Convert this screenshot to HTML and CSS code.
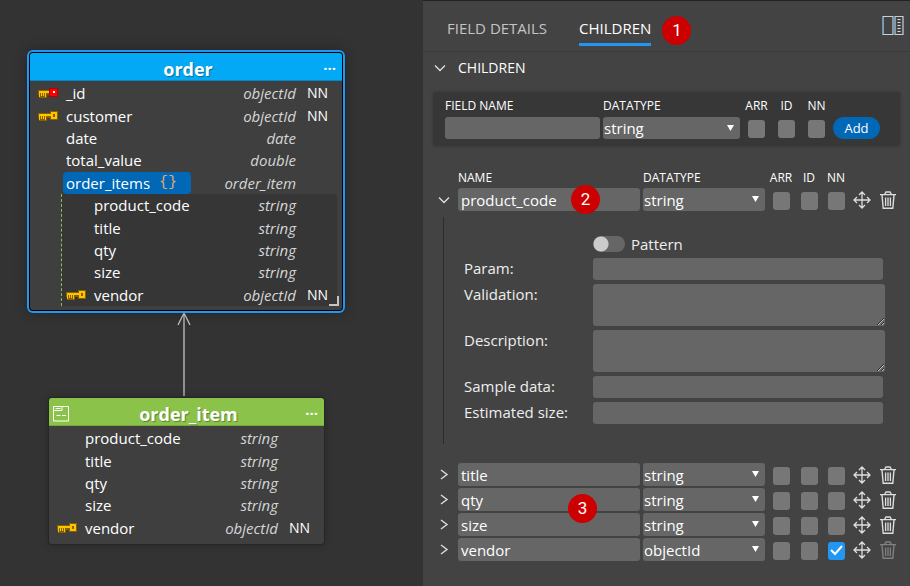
FILE: index.html
```html
<!DOCTYPE html>
<html lang="en">
<head>
    <meta charset="UTF-8">
    <meta name="viewport" content="width=device-width, initial-scale=1.0">
    <title>Data Model - order</title>
    <link rel="stylesheet" href="styles.css">
</head>
<body>
    <!-- Shared icons -->
    <svg class="sprite" aria-hidden="true">
        <symbol id="icon-key" viewBox="0 0 20 10">
            <path d="M0 2h12V0h8v9h-8V7H9v3H1V7H0z" fill="#8a6100"/>
            <path d="M1 3h12v2H8v4H7V5H6v3H5V5H4v3H3V5H2v4H1z" fill="#ffc400"/>
            <path d="M13 1h6v7h-6z" fill="#ffc400"/>
            <path d="M15 3h2v3h-2z" fill="#8a6100"/>
        </symbol>
        <symbol id="icon-key-red" viewBox="0 0 20 10">
            <path d="M0 2h12v5H9v3H1V7H0z" fill="#8a6100"/>
            <path d="M1 3h11v2H8v4H7V5H6v3H5V5H4v3H3V5H2v4H1z" fill="#ffc400"/>
            <path d="M11 0h9v9h-9z" fill="#b80000"/>
            <path d="M12 1h7v7h-7z" fill="#ff0000"/>
            <path d="M15 3h2v2h-2z" fill="#fff"/>
        </symbol>
        <symbol id="icon-move" viewBox="0 0 18 18">
            <path d="M9 1v16M1 9h16M6 4l3-3 3 3M6 14l3 3 3-3M4 6L1 9l3 3M14 6l3 3-3 3" fill="none" stroke="currentColor" stroke-width="1.3"/>
        </symbol>
        <symbol id="icon-trash" viewBox="0 0 18 18">
            <path d="M1 3.6h16M5.5 3.5L7 1h4l1.5 2.5M3 4l1.2 13.2h9.6L15 4" fill="none" stroke="currentColor" stroke-width="1.4"/>
            <path d="M6.6 6.500v8.500M9 6.500v8.500M11.400 6.500v8.500" stroke="currentColor" stroke-width="1.3"/>
        </symbol>
        <symbol id="icon-down" viewBox="0 0 12 12">
            <path d="M1 3.500l5 5 5-5" fill="none" stroke="currentColor" stroke-width="1.4"/>
        </symbol>
        <symbol id="icon-right" viewBox="0 0 12 12">
            <path d="M3 1l6 4.500-6 4.500" fill="none" stroke="currentColor" stroke-width="1.4"/>
        </symbol>
    </svg>

    <div class="app">
        <!-- Diagram -->
        <main class="canvas">
            <svg class="link" viewBox="0 0 16 86" aria-hidden="true">
                <path d="M8 1v83M2 13L8 1l6 12" fill="none" stroke="#c4c4c4" stroke-width="1.3"/>
            </svg>

            <section class="entity entity-order selected">
                <header class="entity-header">
                    <h2>order</h2>
                    <button class="more" aria-label="More">···</button>
                </header>
                <div class="fields">
                    <div class="field"><svg class="key"><use href="#icon-key-red"/></svg><span class="name">_id</span><span class="type">objectId</span><span class="nn">NN</span></div>
                    <div class="field"><svg class="key"><use href="#icon-key"/></svg><span class="name">customer</span><span class="type">objectId</span><span class="nn">NN</span></div>
                    <div class="field"><span class="name">date</span><span class="type">date</span></div>
                    <div class="field"><span class="name">total_value</span><span class="type">double</span></div>
                    <div class="field"><span class="name active">order_items<span class="braces">{}</span></span><span class="type">order_item</span></div>
                    <div class="nested">
                        <div class="field"><span class="name">product_code</span><span class="type">string</span></div>
                        <div class="field"><span class="name">title</span><span class="type">string</span></div>
                        <div class="field"><span class="name">qty</span><span class="type">string</span></div>
                        <div class="field"><span class="name">size</span><span class="type">string</span></div>
                        <div class="field"><svg class="key"><use href="#icon-key"/></svg><span class="name">vendor</span><span class="type">objectId</span><span class="nn">NN</span></div>
                    </div>
                </div>
                <span class="resize"></span>
            </section>

            <section class="entity entity-item">
                <header class="entity-header">
                    <svg class="entity-icon" viewBox="0 0 16 16" aria-hidden="true">
                        <path d="M.5.500h15v14.500H.500zM.500 4.500h8.500v-4M2.500 2.500h5M3.500 9.500h4M9 9.500h4" fill="none" stroke="#fff"/>
                    </svg>
                    <h2>order_item</h2>
                    <button class="more" aria-label="More">···</button>
                </header>
                <div class="fields">
                    <div class="field"><span class="name">product_code</span><span class="type">string</span></div>
                    <div class="field"><span class="name">title</span><span class="type">string</span></div>
                    <div class="field"><span class="name">qty</span><span class="type">string</span></div>
                    <div class="field"><span class="name">size</span><span class="type">string</span></div>
                    <div class="field"><svg class="key"><use href="#icon-key"/></svg><span class="name">vendor</span><span class="type">objectId</span><span class="nn">NN</span></div>
                </div>
            </section>
        </main>

        <!-- Properties -->
        <aside class="panel">
            <nav class="tabs">
                <button class="tab">FIELD DETAILS</button>
                <button class="tab current">CHILDREN<span class="badge badge-tab">1</span></button>
                <button class="dock" aria-label="Dock panel">
                    <svg width="22" height="20" viewBox="0 0 22 20">
                        <path d="M1 .500h10v18H1zM13 .500h8v18h-8z" fill="none" stroke="#c6d0d8" stroke-width="1.2"/>
                        <path d="M12 0v19M.500 0v19" stroke="#5b9bc8"/>
                        <path d="M15.500 3.500h3M15.500 6.500h3M15.500 9.500h3M15.500 12.500h3M15.500 15.500h3" stroke="#ddd"/>
                    </svg>
                </button>
            </nav>

            <button class="section-title"><svg class="chevron"><use href="#icon-down"/></svg>CHILDREN</button>

            <form class="add-form">
                <label for="new-name">FIELD NAME</label>
                <label for="new-type">DATATYPE</label>
                <label class="center" for="new-arr">ARR</label>
                <label class="center" for="new-id">ID</label>
                <label class="center" for="new-nn">NN</label>
                <span></span>
                <input type="text" id="new-name">
                <select id="new-type"><option>string</option><option>objectId</option></select>
                <input type="checkbox" id="new-arr">
                <input type="checkbox" id="new-id">
                <input type="checkbox" id="new-nn">
                <button type="button" class="add">Add</button>
            </form>

            <div class="children">
                <div class="row head">
                    <span></span>
                    <label for="name-1">NAME</label>
                    <label for="type-1">DATATYPE</label>
                    <label class="center" for="arr-1">ARR</label>
                    <label class="center" for="id-1">ID</label>
                    <label class="center" for="nn-1">NN</label>
                </div>
                <div class="row">
                    <button class="toggle" aria-label="Collapse"><svg class="chevron"><use href="#icon-down"/></svg></button>
                    <input type="text" id="name-1" value="product_code">
                    <select id="type-1"><option>string</option><option>objectId</option></select>
                    <input type="checkbox" id="arr-1">
                    <input type="checkbox" id="id-1">
                    <input type="checkbox" id="nn-1">
                    <button class="icon" aria-label="Move"><svg><use href="#icon-move"/></svg></button>
                    <button class="icon" aria-label="Delete"><svg><use href="#icon-trash"/></svg></button>
                    <span class="badge badge-name">2</span>
                </div>

                <div class="details">
                    <span></span>
                    <label class="switch"><input type="checkbox" role="switch">Pattern</label>
                    <label for="param">Param:</label>
                    <input type="text" id="param">
                    <label for="validation">Validation:</label>
                    <textarea id="validation"></textarea>
                    <label for="description">Description:</label>
                    <textarea id="description"></textarea>
                    <label for="sample">Sample data:</label>
                    <input type="text" id="sample">
                    <label for="size">Estimated size:</label>
                    <input type="text" id="size">
                </div>

                <div class="row">
                    <button class="toggle" aria-label="Expand"><svg class="chevron"><use href="#icon-right"/></svg></button>
                    <input type="text" value="title" aria-label="Name">
                    <select aria-label="Datatype"><option>string</option><option>objectId</option></select>
                    <input type="checkbox" aria-label="ARR">
                    <input type="checkbox" aria-label="ID">
                    <input type="checkbox" aria-label="NN">
                    <button class="icon" aria-label="Move"><svg><use href="#icon-move"/></svg></button>
                    <button class="icon" aria-label="Delete"><svg><use href="#icon-trash"/></svg></button>
                </div>
                <div class="row">
                    <button class="toggle" aria-label="Expand"><svg class="chevron"><use href="#icon-right"/></svg></button>
                    <input type="text" value="qty" aria-label="Name">
                    <select aria-label="Datatype"><option>string</option><option>objectId</option></select>
                    <input type="checkbox" aria-label="ARR">
                    <input type="checkbox" aria-label="ID">
                    <input type="checkbox" aria-label="NN">
                    <button class="icon" aria-label="Move"><svg><use href="#icon-move"/></svg></button>
                    <button class="icon" aria-label="Delete"><svg><use href="#icon-trash"/></svg></button>
                    <span class="badge badge-list">3</span>
                </div>
                <div class="row">
                    <button class="toggle" aria-label="Expand"><svg class="chevron"><use href="#icon-right"/></svg></button>
                    <input type="text" value="size" aria-label="Name">
                    <select aria-label="Datatype"><option>string</option><option>objectId</option></select>
                    <input type="checkbox" aria-label="ARR">
                    <input type="checkbox" aria-label="ID">
                    <input type="checkbox" aria-label="NN">
                    <button class="icon" aria-label="Move"><svg><use href="#icon-move"/></svg></button>
                    <button class="icon" aria-label="Delete"><svg><use href="#icon-trash"/></svg></button>
                </div>
                <div class="row">
                    <button class="toggle" aria-label="Expand"><svg class="chevron"><use href="#icon-right"/></svg></button>
                    <input type="text" value="vendor" aria-label="Name">
                    <select aria-label="Datatype"><option>objectId</option><option>string</option></select>
                    <input type="checkbox" aria-label="ARR">
                    <input type="checkbox" aria-label="ID">
                    <input type="checkbox" aria-label="NN" checked>
                    <button class="icon" aria-label="Move"><svg><use href="#icon-move"/></svg></button>
                    <button class="icon" aria-label="Delete" disabled><svg><use href="#icon-trash"/></svg></button>
                </div>
            </div>
        </aside>
    </div>
</body>
</html>
```
FILE: styles.css
```css
* {
    box-sizing: border-box;
}
body {
    margin: 0;
    font-family: "Open Sans", sans-serif;
    font-size: 15px;
    line-height: 22px;
    color: #fff;
    background: #333;
}
button, input, select, textarea {
    font: inherit;
    color: inherit;
    border: none;
    margin: 0;
    padding: 0;
}
button {
    background: none;
    cursor: pointer;
}
.sprite {
    display: none;
}
.app {
    display: flex;
    min-height: 100vh;
}

/* Diagram */
.canvas {
    position: relative;
    flex: 0 0 423px;
    background: #333;
}
.link {
    position: absolute;
    left: 176px;
    top: 312px;
    width: 16px;
    height: 86px;
}
.entity {
    position: absolute;
    background: #3f3f3f;
    border-radius: 3px;
    box-shadow: 0 0 0 1px #262626, 0 0 8px rgba(0, 0, 0, 0.3);
}
.entity-order {
    left: 30px;
    top: 53px;
    width: 312px;
    padding-bottom: 4px;
}
.entity-item {
    left: 49px;
    top: 398px;
    width: 275px;
    padding-bottom: 5px;
}
.entity.selected {
    box-shadow: 0 0 0 1px #000, 0 0 0 3px #2196f3, 0 0 14px 3px rgba(0, 0, 0, 0.3);
}
.entity-header {
    position: relative;
    display: flex;
    align-items: center;
    justify-content: center;
    height: 28px;
    padding: 4px 0 0 4px;
    background: #03a9f4;
    border-bottom: 1px solid #0288c9;
    border-radius: 3px 3px 0 0;
}
.entity-item .entity-header {
    background: #8bc34a;
    border-color: #76a83c;
}
.entity-header h2 {
    margin: 0;
    font-size: 18px;
    line-height: 22px;
    text-shadow: 1px 1px 1px rgba(0, 0, 0, 0.35);
}
.entity-icon {
    position: absolute;
    left: 4px;
    top: 8px;
    width: 16px;
    height: 16px;
}
.more {
    position: absolute;
    right: 6px;
    top: 4px;
    font-weight: bold;
    line-height: 22px;
}
.fields {
    display: flex;
    flex-direction: column;
    min-height: 225px;
    padding-top: 1px;
}
.entity-item .fields {
    min-height: 113px;
}
.field {
    flex: 1 0 22px;
    display: grid;
    grid-template-columns: 28px 1fr auto 27px;
    column-gap: 8px;
    align-items: center;
    padding-right: 11px;
}
.field .key {
    grid-column: 1;
    grid-row: 1;
    justify-self: end;
    width: 20px;
    height: 10px;
}
.name {
    grid-column: 2;
    grid-row: 1;
}
.type {
    grid-column: 3;
    font-style: italic;
    color: #d5d5d5;
}
.nn {
    grid-column: 4;
    padding-left: 3px;
    font-size: 14px;
}
.active {
    display: flex;
    align-items: center;
    justify-self: start;
    gap: 9px;
    height: 22px;
    margin-left: -3px;
    padding: 0 14px 0 3px;
    background: #0068b7;
    border-radius: 4px;
}
.braces {
    font-family: "Liberation Mono", monospace;
    color: #e0a868;
}
.nested {
    flex: 5 0 110px;
    display: flex;
    flex-direction: column;
    margin: 0 5px 0 31px;
    background: #363636;
    border-left: 1px dashed #8bc34a;
    border-radius: 0 3px 3px 0;
}
.nested .field {
    grid-template-columns: 24px 1fr auto 27px;
    padding-right: 6px;
}
.resize {
    position: absolute;
    right: 3px;
    bottom: 4px;
    width: 10px;
    height: 10px;
    border-right: 2px solid #c4c4c4;
    border-bottom: 2px solid #c4c4c4;
}

/* Properties */
.panel {
    flex: 1;
    min-width: 0;
    background: #434343;
    border-top: 1px solid #222;
}
.tabs {
    display: flex;
    align-items: flex-start;
    gap: 32px;
    height: 51px;
    padding: 15px 6px 0 24px;
    border-bottom: 1px solid #3a3a3a;
}
.tab {
    position: relative;
    height: 30px;
    padding-bottom: 4px;
    border-bottom: 3px solid transparent;
    color: #c4c4c4;
}
.tab.current {
    color: #fff;
    border-color: #2196f3;
}
.dock {
    margin-left: auto;
    line-height: 0;
}
.section-title {
    display: flex;
    align-items: center;
    gap: 12px;
    margin: 5px 0 0 11px;
    font-size: 14px;
}
.chevron {
    display: block;
    width: 12px;
    height: 12px;
    color: #ddd;
}
.add-form, .row {
    display: grid;
    column-gap: 3px;
    align-items: center;
}
.add-form {
    grid-template-columns: 155fr 137fr 27px 27px 27px 47px;
    margin: 13px 10px 0;
    padding: 3px 20px 7px 12px;
    background: #373737;
    border-radius: 3px;
    box-shadow: 0 0 3px #333;
}
.add-form label, .head label {
    font-size: 12px;
}
.center {
    text-align: center;
}
input[type="text"], select, textarea {
    width: 100%;
    height: 22px;
    background-color: #666;
    border-radius: 3px;
    outline: none;
}
select {
    appearance: none;
    padding-left: 1px;
    background-image: url("data:image/svg+xml,%3Csvg xmlns='http://www.w3.org/2000/svg' width='7' height='6'%3E%3Cpath d='M0 0h7L3.5 6z' fill='white'/%3E%3C/svg%3E");
    background-repeat: no-repeat;
    background-position: right 6px top 8px;
}
input[type="checkbox"] {
    appearance: none;
    justify-self: center;
    width: 17px;
    height: 18px;
    background: #777 center no-repeat;
    border-radius: 3px;
}
.row input[type="checkbox"], .add-form input[type="checkbox"] {
    margin-top: 2px;
}
.row input[type="checkbox"]:checked {
    background-color: #2196f3;
    background-image: url("data:image/svg+xml,%3Csvg xmlns='http://www.w3.org/2000/svg' width='13' height='11'%3E%3Cpath d='M1 5l4 4 7-8' fill='none' stroke='white' stroke-width='2'/%3E%3C/svg%3E");
}
.add {
    height: 22px;
    font-size: 13px;
    line-height: 20px;
    background: #0068b7;
    border-radius: 11px;
}
.children {
    display: flex;
    flex-direction: column;
    gap: 2px;
    padding: 21px 10px 0 12px;
}
.row {
    position: relative;
    grid-template-columns: 20px 182fr 122fr 26px 24px 24px 21px 25px;
}
.row input[type="text"], .row select {
    height: 23px;
}
.row input[type="text"] {
    padding-left: 3px;
}
.head {
    height: 19px;
}
.toggle {
    justify-self: start;
    padding-left: 3px;
}
.icon {
    justify-self: center;
    height: 20px;
    color: #ddd;
}
.icon svg {
    display: block;
    width: 18px;
    height: 18px;
}
.icon:disabled {
    color: #808080;
}
.details {
    display: grid;
    grid-template-columns: 129px 1fr;
    row-gap: 4px;
    align-items: start;
    margin: 4px 0 17px 8px;
    padding: 15px 15px 20px 20px;
    border-left: 1px solid #2b2b2b;
    line-height: 20px;
    color: #eee;
}
.details input[type="text"] {
    width: calc(100% - 2px);
}
.details textarea {
    display: block;
    height: 42px;
    resize: both;
}
.switch {
    display: flex;
    align-items: center;
    gap: 6px;
    height: 22px;
    padding-top: 2px;
}
.switch input[type="checkbox"] {
    width: 32px;
    height: 16px;
    border-radius: 8px;
    background: radial-gradient(circle at 8px 8px, #ccc 7px, #666 8px);
}

/* Numbered markers */
.badge {
    position: absolute;
    z-index: 1;
    width: 29px;
    height: 29px;
    border-radius: 50%;
    background: #c00;
    color: #fff;
    font-family: Roboto, sans-serif;
    font-size: 17px;
    line-height: 29px;
    text-align: center;
}
.badge-tab {
    left: calc(100% + 11px);
    top: 0;
}
.badge-name {
    left: 136px;
    top: -3px;
}
.badge-list {
    left: 133px;
    top: 6px;
}
```
